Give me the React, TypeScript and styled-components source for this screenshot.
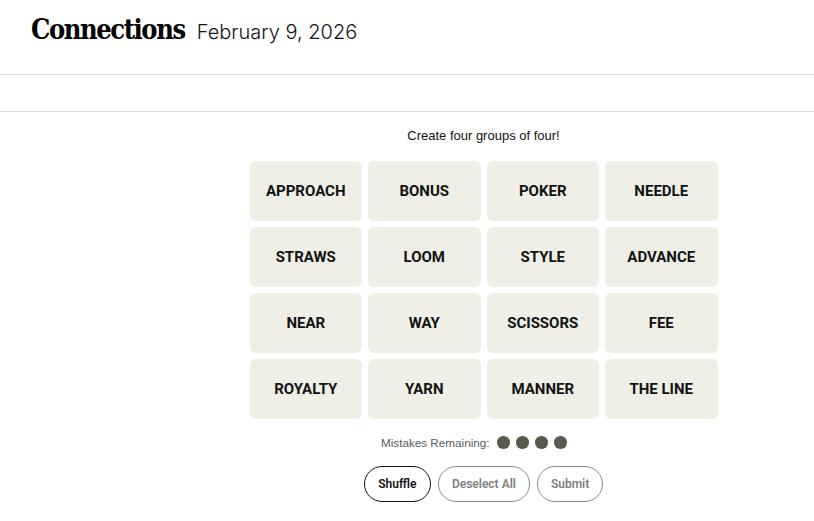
import styled, { createGlobalStyle } from "styled-components";

const GlobalStyle = createGlobalStyle`
    html, body {
        margin: 0;
        padding: 0;
        background: #ffffff;
    }
    body {
        font-family: "Liberation Sans", Arial, sans-serif;
        color: #000000;
    }
`;

const Header = styled.header`
    display: flex;
    align-items: baseline;
    gap: 12px;
    height: 75px;
    padding: 0 31px;
    box-sizing: border-box;
    padding-top: 14px;
    border-bottom: 1px solid #dcdcdc;
`;

const Title = styled.h1`
    margin: 0;
    font-family: "DejaVu Serif", "Liberation Serif", serif;
    font-stretch: condensed;
    font-weight: 700;
    font-size: 27px;
    letter-spacing: -1.4px;
    color: #000000;
`;

const DateText = styled.span`
    font-family: Inter, "Liberation Sans", sans-serif;
    font-weight: 300;
    font-size: 20px;
    color: #121212;
`;

const SubBar = styled.div`
    height: 36px;
    border-bottom: 1px solid #dcdcdc;
`;

const Board = styled.main`
    display: flex;
    flex-direction: column;
    align-items: center;
    padding-left: 153px;
    padding-top: 16px;
`;

const Prompt = styled.p`
    margin: 0 0 17px 0;
    font-family: "Liberation Sans", Arial, sans-serif;
    font-size: 13px;
    line-height: 16px;
    color: #121212;
`;

const Grid = styled.div`
    display: grid;
    grid-template-columns: repeat(4, 112.5px);
    grid-auto-rows: 60px;
    gap: 6px;
`;

const Tile = styled.button`
    display: flex;
    align-items: center;
    justify-content: center;
    border: none;
    border-radius: 6px;
    background: #efefe6;
    font-family: Roboto, "Liberation Sans", sans-serif;
    font-weight: 700;
    font-size: 15px;
    color: #121212;
    text-transform: uppercase;
    padding: 0;
`;

const Mistakes = styled.div`
    display: flex;
    align-items: center;
    gap: 8px;
    margin-top: 17px;
    margin-left: -19px;
    font-family: "Liberation Sans", Arial, sans-serif;
    font-size: 11.7px;
    color: #5a5a5a;
`;

const Dots = styled.div`
    display: flex;
    gap: 6.5px;
`;

const Dot = styled.span`
    width: 12.5px;
    height: 12.5px;
    border-radius: 50%;
    background: #5a594e;
`;

const Controls = styled.div`
    display: flex;
    gap: 7px;
    margin-top: 17px;
`;

const Pill = styled.button<{ $active?: boolean }>`
    height: 36px;
    padding: 0 ${(p) => (p.$active ? 13.5 : 13)}px;
    border-radius: 18px;
    background: #ffffff;
    border: 1px solid ${(p) => (p.$active ? "#121212" : "#8a8a8a")};
    color: ${(p) => (p.$active ? "#121212" : "#7f7f7f")};
    font-family: Roboto, "Liberation Sans", sans-serif;
    font-weight: 600;
    font-size: 12px;
`;

const words = [
    "Approach", "Bonus", "Poker", "Needle",
    "Straws", "Loom", "Style", "Advance",
    "Near", "Way", "Scissors", "Fee",
    "Royalty", "Yarn", "Manner", "The Line",
];

const App = () => {
    return (
        <>
            <GlobalStyle />
            <Header>
                <Title>Connections</Title>
                <DateText>February 9, 2026</DateText>
            </Header>
            <SubBar />
            <Board>
                <Prompt>Create four groups of four!</Prompt>
                <Grid>
                    {words.map((w) => (
                        <Tile key={w}>{w}</Tile>
                    ))}
                </Grid>
                <Mistakes>
                    Mistakes Remaining:
                    <Dots>
                        {[0, 1, 2, 3].map((i) => (
                            <Dot key={i} />
                        ))}
                    </Dots>
                </Mistakes>
                <Controls>
                    <Pill $active>Shuffle</Pill>
                    <Pill>Deselect All</Pill>
                    <Pill>Submit</Pill>
                </Controls>
            </Board>
        </>
    );
};

export default App;
